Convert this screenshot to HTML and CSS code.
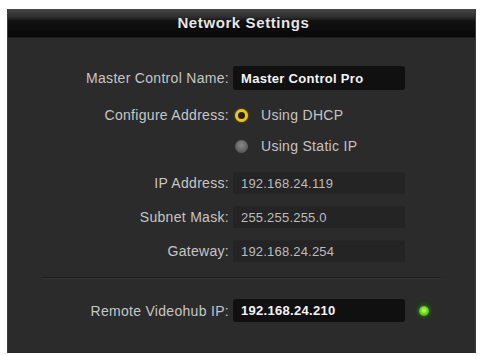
FILE: index.html
```html
<!DOCTYPE html>
<html lang="en">
<head>
    <meta charset="UTF-8">
    <title>Network Settings</title>
    <link rel="stylesheet" href="styles.css">
</head>
<body>
    <div class="panel">
        <div class="title-bar">Network Settings</div>

        <div class="form">
            <div class="row row-name">
                <label>Master Control Name:</label>
                <div class="field active">Master Control Pro</div>
            </div>

            <div class="row row-dhcp">
                <label>Configure Address:</label>
                <div class="radio-line"><span class="radio on"></span>Using DHCP</div>
            </div>

            <div class="row row-static">
                <label></label>
                <div class="radio-line"><span class="radio"></span>Using Static IP</div>
            </div>

            <div class="row row-ip">
                <label>IP Address:</label>
                <div class="field disabled">192.168.24.119</div>
            </div>

            <div class="row row-mask">
                <label>Subnet Mask:</label>
                <div class="field disabled">255.255.255.0</div>
            </div>

            <div class="row row-gw">
                <label>Gateway:</label>
                <div class="field disabled">192.168.24.254</div>
            </div>

            <div class="separator"></div>

            <div class="row row-remote">
                <label>Remote Videohub IP:</label>
                <div class="field active">192.168.24.210</div>
                <span class="led"></span>
            </div>
        </div>
    </div>
</body>
</html>
```

FILE: styles.css
```css
body {
    margin: 0;
    background-color: #ffffff;
    font-family: "Liberation Sans", Arial, sans-serif;
}

.panel {
    margin: 9px 5px 0 7px;
    width: 469px;
    height: 344px;
    background-color: #2b2b2b;
    border-left: 1px solid #3c3c3c;
    border-right: 1px solid #3a3a3a;
    box-sizing: border-box;
}

.title-bar {
    height: 28px;
    line-height: 28px;
    text-align: center;
    color: #e6e6e6;
    font-weight: bold;
    font-size: 15px;
    letter-spacing: 0.6px;
    padding-left: 4px;
    background: linear-gradient(#474747 0%, #2c2c2c 30%, #121212 42%, #080808 100%);
    border-bottom: 1px solid #1c1c1c;
    text-shadow: 0 1px 1px #000;
}

.form {
    padding-top: 28px;
}

.row {
    display: grid;
    grid-template-columns: 221px 172px auto;
    column-gap: 4px;
    align-items: center;
}

.row label {
    text-align: right;
    color: #c6c6c6;
    font-size: 14px;
    letter-spacing: 0.3px;
}

.field {
    box-sizing: border-box;
    padding-left: 8px;
    font-size: 13px;
    display: flex;
    align-items: center;
}

.field.active {
    height: 24px;
    background-color: #101010;
    border-radius: 3px;
    color: #f4f4f4;
    font-weight: bold;
    letter-spacing: 0.3px;
}

.field.disabled {
    height: 22px;
    background-color: #242424;
    border-top: 1px solid #262626;
    color: #bcbcbc;
    letter-spacing: 0.2px;
}

.radio-line {
    display: flex;
    align-items: center;
    color: #c4c4c4;
    font-size: 14px;
    letter-spacing: 0.3px;
    height: 22px;
    padding-left: 2px;
}

.radio {
    width: 13px;
    height: 13px;
    border-radius: 50%;
    margin-right: 13px;
    background: radial-gradient(circle at 50% 40%, #8a8a8a, #5a5a5a 70%, #4a4a4a);
}

.radio.on {
    box-sizing: border-box;
    border: 3px solid #e8c812;
    background: #2a1c08;
    box-shadow: 0 0 2px #a08000;
}

.row-dhcp {
    margin-top: 14px;
}

.row-static {
    margin-top: 9px;
}

.row-ip {
    margin-top: 15px;
}

.row-mask,
.row-gw {
    margin-top: 12px;
}

.separator {
    margin: 15px 34px 0 34px;
    height: 1px;
    background-color: #1d1d1d;
    border-bottom: 1px solid #353535;
}

.row-remote {
    margin-top: 20px;
}

.row-remote .field.active {
    height: 23px;
}

.led {
    width: 10px;
    height: 10px;
    margin-left: 10px;
    border-radius: 50%;
    background: radial-gradient(circle at 50% 45%, #c6ff6a, #5ad40c 55%, #2e8a05);
    box-shadow: 0 0 4px #3aa010;
}
```
